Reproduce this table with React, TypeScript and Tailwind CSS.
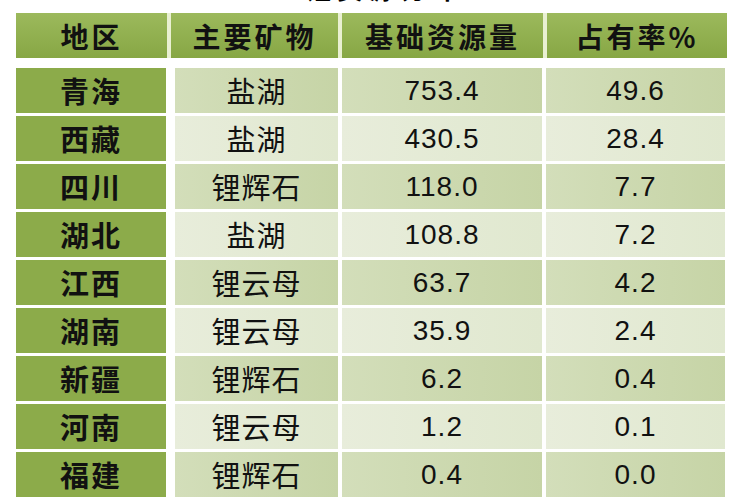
/**
 * LithiumTable - 各省锂资源基础储量分布表
 */

type Row = { region: string; mineral: string; base: string; share: string };

const ROWS: Row[] = [
  { region: '青海', mineral: '盐湖', base: '753.4', share: '49.6' },
  { region: '西藏', mineral: '盐湖', base: '430.5', share: '28.4' },
  { region: '四川', mineral: '锂辉石', base: '118.0', share: '7.7' },
  { region: '湖北', mineral: '盐湖', base: '108.8', share: '7.2' },
  { region: '江西', mineral: '锂云母', base: '63.7', share: '4.2' },
  { region: '湖南', mineral: '锂云母', base: '35.9', share: '2.4' },
  { region: '新疆', mineral: '锂辉石', base: '6.2', share: '0.4' },
  { region: '河南', mineral: '锂云母', base: '1.2', share: '0.1' },
  { region: '福建', mineral: '锂辉石', base: '0.4', share: '0.0' },
];

const CJK = "font-['Noto_Sans_CJK_SC',sans-serif]";
const NUM = "font-['Liberation_Sans','Noto_Sans_CJK_SC',sans-serif]";

function HeaderRow() {
  const cell = `h-full flex items-center justify-center text-[28px] font-bold tracking-[3px] text-[#111] bg-gradient-to-b from-[#9cb95c] to-[#87a744] ${CJK}`;
  return (
    <div className="flex h-[45px] ml-[16px] w-[711px] gap-[4px] bg-[#e9f0d2]">
      <div className={`${cell} w-[151px]`}>地区</div>
      <div className={`${cell} w-[167px]`}>主要矿物</div>
      <div className={`${cell} w-[201px]`}>基础资源量</div>
      <div className={`${cell} w-[180px]`}>占有率%</div>
    </div>
  );
}

function BodyRow({ row, odd }: { row: Row; odd: boolean }) {
  const tone = odd
    ? 'bg-gradient-to-r from-[#d3deba] to-[#c6d4a6]'
    : 'bg-gradient-to-r from-[#e8eddb] to-[#e0e8cf]';
  const cell = `h-full flex items-center justify-center text-[#111] ${tone}`;
  return (
    <div className="flex h-[45px] ml-[16px]">
      <div className={`w-[150px] h-full flex items-center justify-center bg-[#8cab4a] text-[29px] font-bold tracking-[2px] text-[#111] ${CJK}`}>
        {row.region}
      </div>
      <div className={`${cell} ml-[9px] w-[163px] text-[29px] tracking-[1px] ${CJK}`}>{row.mineral}</div>
      <div className={`${cell} ml-[4px] w-[200px] text-[28px] tracking-[1px] ${NUM}`}>{row.base}</div>
      <div className={`${cell} ml-[4px] w-[179px] text-[28px] tracking-[1px] ${NUM}`}>{row.share}</div>
    </div>
  );
}

export default function App() {
  return (
    <div className="w-[750px] h-[500px] bg-white overflow-hidden">
      <div className="h-[4px] overflow-hidden flex items-start justify-center pl-[20px]">
        <span className={`block -mt-[25px] h-[29px] text-[26px] leading-[26px] font-bold tracking-[6px] text-black ${CJK}`}>
          锂资源分布
        </span>
      </div>
      <div className="pt-[9px]">
        <HeaderRow />
      </div>
      <div className="mt-[10px] flex flex-col gap-[3px]">
        {ROWS.map((r, i) => (
          <BodyRow key={r.region} row={r} odd={i % 2 === 0} />
        ))}
      </div>
    </div>
  );
}
